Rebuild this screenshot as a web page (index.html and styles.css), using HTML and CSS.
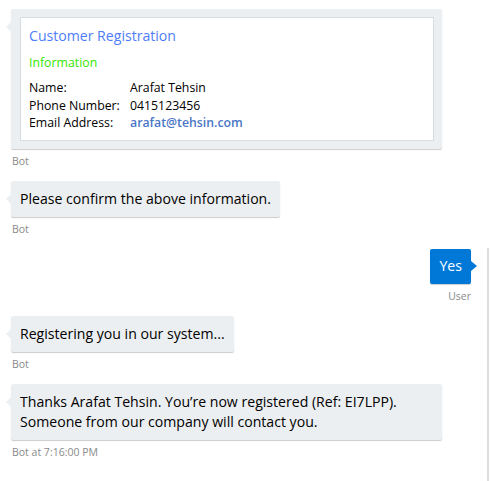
FILE: index.html
```html
<!DOCTYPE html>
<html lang="en">
<head>
<meta charset="utf-8">
<title>Chat</title>
<link rel="stylesheet" href="styles.css">
</head>
<body>
<div class="chat">
  <div class="msg bot">
    <div class="bubble card-bubble">
      <div class="card">
        <div class="card-title">Customer Registration</div>
        <div class="card-sub">Information</div>
        <div class="facts">
          <div class="k">Name:</div><div class="v">Arafat Tehsin</div>
          <div class="k">Phone Number:</div><div class="v">0415123456</div>
          <div class="k">Email Address:</div><div class="v email">arafat@tehsin.com</div>
        </div>
      </div>
    </div>
    <div class="from">Bot</div>
  </div>

  <div class="msg bot">
    <div class="bubble">Please confirm the above information.</div>
    <div class="from">Bot</div>
  </div>

  <div class="msg user">
    <div class="bubble">Yes</div>
    <div class="from">User</div>
  </div>

  <div class="msg bot">
    <div class="bubble">Registering you in our system...</div>
    <div class="from">Bot</div>
  </div>

  <div class="msg bot">
    <div class="bubble">Thanks Arafat Tehsin. You’re now registered (Ref: EI7LPP). Someone from our company will contact you.</div>
    <div class="from">Bot at 7:16:00 PM</div>
  </div>
</div>
<div class="scrollbar"></div>
</body>
</html>
```
FILE: styles.css
```css
html, body {
  margin: 0;
  padding: 0;
  background: #fff;
}
body {
  font-family: "Open Sans", "Noto Sans", sans-serif;
  color: #000;
  position: relative;
  width: 490px;
  height: 481px;
  overflow: hidden;
}
.chat {
  display: flex;
  flex-direction: column;
  gap: 12px;
  padding: 9px 19px 0 11px;
}
.msg {
  display: flex;
  flex-direction: column;
}
.msg.bot { align-items: flex-start; }
.msg.user { align-items: flex-end; }
.bubble {
  position: relative;
  box-sizing: border-box;
  max-width: 431px;
  background: #eceff1;
  border-radius: 2px;
  box-shadow: 0 1px 1px rgba(0, 0, 0, 0.2);
  padding: 8px 9px;
  font-size: 14.1px;
  line-height: 20px;
}
.msg.bot .bubble::before {
  content: "";
  position: absolute;
  left: -5px;
  top: 13px;
  border-style: solid;
  border-width: 5px 5px 5px 0;
  border-color: transparent #eceff1 transparent transparent;
}
.msg.user .bubble {
  background: #0078d7;
  color: #fff;
  padding: 7px 9px 8px;
}
.msg.user .bubble::after {
  content: "";
  position: absolute;
  right: -6px;
  top: 12px;
  border-style: solid;
  border-width: 5px 0 5px 6px;
  border-color: transparent transparent transparent #0078d7;
}
.card-bubble {
  width: 431px;
  padding: 8px 8px 8px 9px;
}
.card {
  background: #fff;
  border: 1px solid #d5dde3;
  padding: 6px 8px 8px;
}
.card-title {
  color: #4d7ef7;
  font-size: 14.1px;
  line-height: 24px;
}
.card-sub {
  color: #33e600;
  font-size: 12.3px;
  line-height: 18px;
  margin-top: 6px;
}
.facts {
  display: grid;
  grid-template-columns: 101px auto;
  font-size: 12.3px;
  line-height: 17.5px;
  margin-top: 7px;
}
.facts .email {
  color: #4a76c6;
  font-weight: 600;
}
.from {
  font-size: 10.5px;
  line-height: 15px;
  color: #8a8a8a;
  margin-top: 5px;
  padding-left: 1px;
}
.scrollbar {
  position: absolute;
  left: 487px;
  top: 248px;
  width: 2px;
  height: 233px;
  background: #dcdfe2;
}
```
